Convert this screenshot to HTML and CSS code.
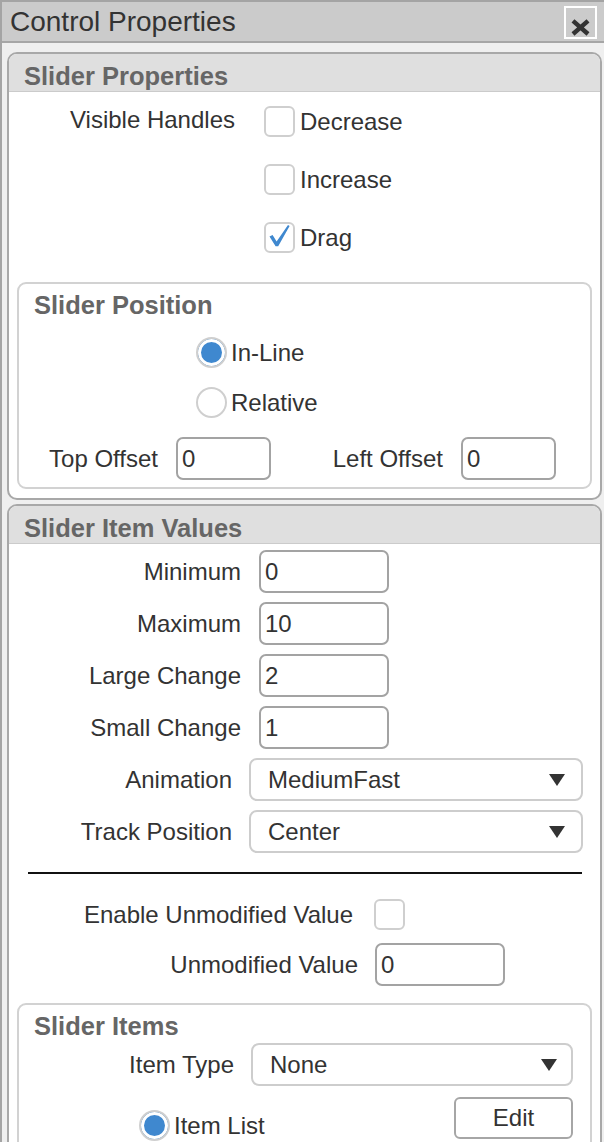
FILE: index.html
```html
<!DOCTYPE html>
<html lang="en">
<head>
<meta charset="utf-8">
<title>Control Properties</title>
<link rel="stylesheet" href="styles.css">
</head>
<body>
<div class="dialog">
  <div class="titlebar">
    <span class="title">Control Properties</span>
    <button class="close" type="button" aria-label="Close">
      <svg width="29" height="29" viewBox="0 0 29 29"><path d="M7 12.8 L22 26 M22 12.8 L7 26" stroke="#333" stroke-width="4.4" fill="none"/></svg>
    </button>
  </div>
  <div class="body">
    <section class="panel">
      <h2 class="panel-head">Slider Properties</h2>
      <div class="panel-content p1">
        <div class="handles">
          <div class="lbl w-handles">Visible Handles</div>
          <div class="checks">
            <div class="opt"><span class="cb"></span>Decrease</div>
            <div class="opt"><span class="cb"></span>Increase</div>
            <div class="opt"><span class="cb"><svg width="27" height="27" viewBox="0 0 27 27"><path d="M3.5 12.6 L6.6 11 L10.6 17.6 L22 1 L23.6 2 L12.2 22.2 L9.6 22.2 Z" fill="#3f88cf"/></svg></span>Drag</div>
          </div>
        </div>
        <div class="group">
          <div class="group-title">Slider Position</div>
          <div class="radios pos-radios">
            <div class="opt"><span class="rb on"></span>In-Line</div>
            <div class="opt"><span class="rb"></span>Relative</div>
          </div>
          <div class="row offsets">
            <span class="lbl w-top">Top Offset</span>
            <input class="txt w-off" type="text" value="0">
            <span class="lbl w-left">Left Offset</span>
            <input class="txt w-off" type="text" value="0">
          </div>
        </div>
      </div>
    </section>

    <section class="panel p2">
      <h2 class="panel-head">Slider Item Values</h2>
      <div class="panel-content c2">
        <div class="fields">
          <div class="row"><span class="lbl w-field">Minimum</span><input class="txt w-num" type="text" value="0"></div>
          <div class="row"><span class="lbl w-field">Maximum</span><input class="txt w-num" type="text" value="10"></div>
          <div class="row"><span class="lbl w-field">Large Change</span><input class="txt w-num" type="text" value="2"></div>
          <div class="row"><span class="lbl w-field">Small Change</span><input class="txt w-num" type="text" value="1"></div>
          <div class="row"><span class="lbl w-select">Animation</span>
            <div class="sel w-sel"><span>MediumFast</span><svg width="16" height="12" viewBox="0 0 16 12"><polygon points="0,0 16,0 8,12" fill="#333"/></svg></div>
          </div>
          <div class="row"><span class="lbl w-select">Track Position</span>
            <div class="sel w-sel"><span>Center</span><svg width="16" height="12" viewBox="0 0 16 12"><polygon points="0,0 16,0 8,12" fill="#333"/></svg></div>
          </div>
        </div>
        <hr class="rule">
        <div class="row enable-row"><span class="lbl w-enable">Enable Unmodified Value</span><span class="cb"></span></div>
        <div class="row unmod-row"><span class="lbl w-unmod">Unmodified Value</span><input class="txt w-num" type="text" value="0"></div>
        <div class="group items">
          <div class="group-title">Slider Items</div>
          <div class="row type-row"><span class="lbl w-type">Item Type</span>
            <div class="sel w-typesel"><span>None</span><svg width="16" height="12" viewBox="0 0 16 12"><polygon points="0,0 16,0 8,12" fill="#333"/></svg></div>
          </div>
          <div class="list-row">
            <div class="opt item-radio"><span class="rb on"></span>Item List</div>
            <button class="btn" type="button">Edit</button>
          </div>
        </div>
      </div>
    </section>
  </div>
</div>
</body>
</html>
```

FILE: styles.css
```css
* { box-sizing: border-box; }

html, body {
  margin: 0;
  padding: 0;
}

body {
  font-family: "Liberation Sans", Arial, Helvetica, sans-serif;
  color: #333;
  background: #efefef;
  overflow: hidden;
}

.dialog {
  border-top: 2px solid #a4a4a4;
  border-left: 2px solid #a4a4a4;
  background: #efefef;
  min-height: 1142px;
}

.titlebar {
  display: flex;
  justify-content: space-between;
  align-items: flex-start;
  height: 41px;
  background: #cbcbcb;
  border-bottom: 2px solid #a6a6a6;
}

.title {
  font-size: 28px;
  line-height: 38px;
  padding: 1px 0 0 8px;
  color: #333;
}

.close {
  margin: 4px 7px 0 0;
  width: 33px;
  height: 33px;
  padding: 0;
  border: 2px solid #fff;
  background: #cbcbcb;
  display: block;
}

.close svg { display: block; }

.body {
  padding: 9px 2px 0 5px;
}

.panel {
  border: 2px solid #a8a8a8;
  border-radius: 10px;
  background: #fff;
  overflow: hidden;
}

.panel + .panel { margin-top: 4px; }

.panel-head {
  margin: 0;
  background: #dfdfdf;
  border-bottom: 1px solid #cbcbcb;
  font-size: 25.5px;
  font-weight: bold;
  color: #666;
  line-height: 29px;
  padding: 8px 0 0 15px;
}

.p1 { padding: 14px 0 9px; }

.lbl {
  flex: none;
  text-align: right;
  font-size: 24px;
  white-space: nowrap;
}

.handles {
  display: flex;
  align-items: flex-start;
}

.w-handles {
  width: 226px;
  line-height: 27px;
  margin-right: 29px;
}

.checks {
  display: flex;
  flex-direction: column;
  gap: 27px;
}

.opt {
  display: flex;
  align-items: center;
  font-size: 24px;
  line-height: 31px;
  height: 31px;
  white-space: nowrap;
}

.cb {
  flex: none;
  display: block;
  width: 31px;
  height: 31px;
  border: 2px solid #cfcfcf;
  border-radius: 6px;
  background: #fff;
  margin-right: 5px;
}

.cb svg { display: block; }

.rb {
  flex: none;
  display: block;
  width: 31px;
  height: 31px;
  border: 2px solid #cfcfcf;
  border-radius: 50%;
  background: #fff;
  margin-right: 4px;
}

.rb.on {
  background: #3f88cf;
  box-shadow: inset 0 0 0 3px #fff;
}

.group {
  margin: 29px 8px 0;
  border: 2px solid #d2d2d2;
  border-radius: 9px;
  padding: 7px 0;
  background: #fff;
}

.group-title {
  font-size: 25.5px;
  font-weight: bold;
  color: #666;
  line-height: 29px;
  padding-left: 15px;
}

.radios {
  display: flex;
  flex-direction: column;
  gap: 19px;
}

.pos-radios { margin: 17px 0 0 177px; }

.row {
  display: flex;
  align-items: center;
}

.offsets { margin-top: 19px; }

.w-top { width: 139px; margin-right: 18px; }
.w-left { width: 172px; margin-right: 18px; }

.txt {
  flex: none;
  height: 43px;
  border: 2px solid #a3a3a3;
  border-radius: 7px;
  background: #fff;
  font-family: "Liberation Sans", Arial, sans-serif;
  font-size: 24px;
  color: #333;
  padding: 0 0 0 4px;
  margin: 0;
  outline: none;
}

.w-off { width: 95px; }
.w-num { width: 130px; }

.c2 { padding: 6px 0 40px; }

.fields {
  display: flex;
  flex-direction: column;
  gap: 9px;
}

.w-field { width: 232px; margin-right: 18px; }
.w-select { width: 223px; margin-right: 17px; }

.sel {
  flex: none;
  display: flex;
  align-items: center;
  justify-content: space-between;
  height: 43px;
  border: 2px solid #cdcdcd;
  border-radius: 8px;
  background: #fff;
  font-size: 24px;
  color: #333;
  padding: 0 16px 0 17px;
}

.sel svg { display: block; }

.w-sel { width: 334px; }

.rule {
  margin: 19px 18px 0 19px;
  border: 0;
  border-top: 2px solid #111;
  height: 0;
}

.enable-row { margin-top: 25px; }
.enable-row .cb { margin-right: 0; }
.w-enable { width: 344px; margin-right: 21px; }

.unmod-row { margin-top: 13px; }
.w-unmod { width: 349px; margin-right: 17px; }

.items {
  margin-top: 17px;
  padding-bottom: 40px;
}

.type-row { margin-top: 2px; }
.w-type { width: 215px; margin-right: 17px; }
.w-typesel { width: 322px; padding-right: 14px; }

.list-row {
  display: flex;
  align-items: flex-start;
  margin-top: 11px;
}

.item-radio { margin: 13px 0 0 120px; }

.btn {
  margin: 0 17px 0 auto;
  width: 119px;
  height: 42px;
  border: 2px solid #a6a6a6;
  border-radius: 6px;
  background: #fff;
  font-family: "Liberation Sans", Arial, sans-serif;
  font-size: 24px;
  color: #333;
  padding: 0;
}
```
